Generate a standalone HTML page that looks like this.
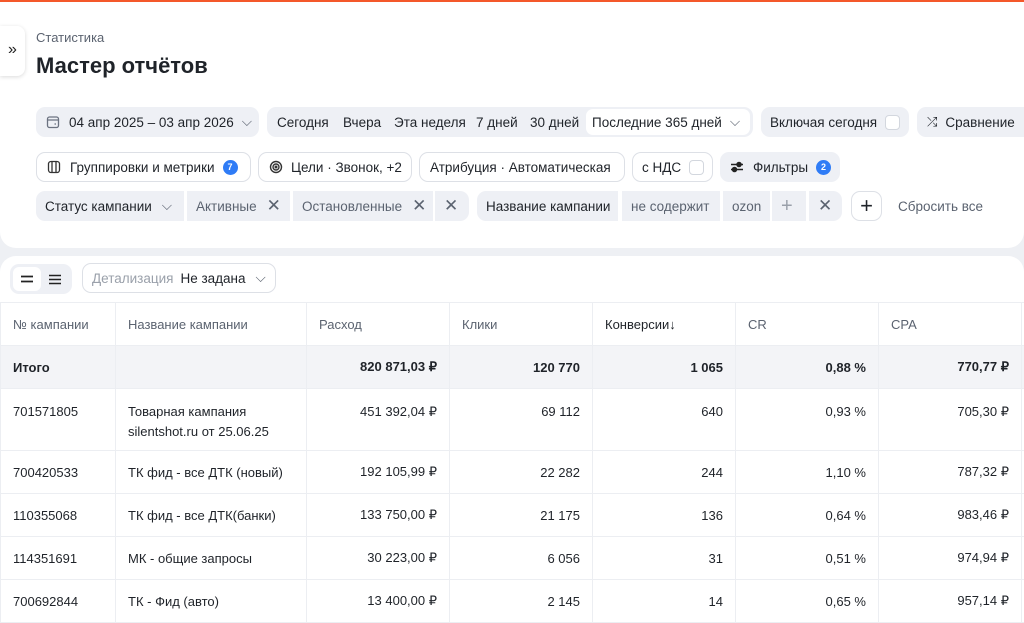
<!DOCTYPE html>
<html><head><meta charset="utf-8"><style>
*{box-sizing:border-box;margin:0;padding:0}
body{width:1024px;height:623px;overflow:hidden;background:#eef0f4;font-family:"Liberation Sans",sans-serif;font-size:13px;color:#1f2329;position:relative}
.top{position:absolute;left:0;top:0;width:1024px;height:248px;background:#fff;border-top:2px solid #f4582a;border-radius:0 0 16px 16px}
.side{position:absolute;left:0;top:26px;width:25px;height:50px;background:#fff;border-radius:0 8px 8px 0;box-shadow:0 1px 4px rgba(0,0,0,.15);font-size:16px;line-height:48px;text-align:center;color:#222}
.bc{position:absolute;left:36px;top:30px;color:#5b6370;font-size:13px}
h1{position:absolute;left:36px;top:53px;font-size:22px;font-weight:bold;color:#1f2329}
.b{position:absolute;height:30px;border-radius:9px;background:#eef0f5;display:flex;align-items:center;white-space:nowrap;font-size:13.5px}
.o{background:#fff;border:1px solid #dde0e6}
.seg{position:absolute;height:30px;background:#eef0f5;display:flex;align-items:center;padding:0 9px;white-space:nowrap;font-size:13.5px}
.g{color:#5b6370}
.chk{display:inline-block;width:15px;height:15px;border:1px solid #d3d7de;border-radius:4px;background:#fff;margin-left:8px}
.badge{display:inline-block;width:15px;height:15px;border-radius:50%;background:#2f7cf6;color:#fff;font-size:9px;font-weight:bold;line-height:15px;text-align:center;margin-left:8px}
.x{color:#5b6370;font-size:17px;margin-left:10px}
.t{position:absolute;top:115px;font-size:13.5px;white-space:nowrap}
.card{position:absolute;left:0;top:256px;width:1024px;height:367px;background:#fff;border-radius:16px 16px 0 0}
table{position:absolute;left:0;top:302px;border-collapse:collapse;font-size:13px;table-layout:fixed;width:1031px}
td{border:1px solid #eceef2;border-top:none;padding:0 12px;height:43px;vertical-align:middle;white-space:nowrap}
thead td{color:#5b6370;height:43px;border-top:1px solid #eceef2}
.r{text-align:right}
.tot td{background:#f3f4f7;font-weight:bold}
.tall td{height:62px;vertical-align:top;padding-top:13px;line-height:20px}
</style></head><body>
<div class="top"></div>
<div class="side">»</div>
<div class="bc">Статистика</div>
<h1>Мастер отчётов</h1>

<div class="b" style="left:36px;top:107px;width:223px;padding-left:10px"><svg width="14" height="14" viewBox="0 0 14 14" fill="none" stroke="#6b7280" stroke-width="1.3"><rect x="1.5" y="2" width="11" height="10.5" rx="2"/><path d="M1.5 5h11M8.5 9h1.5"/></svg><span style="margin-left:9px">04 апр 2025 – 03 апр 2026</span><span class="g" style="margin-left:8px">⌵</span></div>
<div class="b" style="left:267px;top:107px;width:486px"></div>
<span class="t" style="left:277px">Сегодня</span>
<span class="t" style="left:343px">Вчера</span>
<span class="t" style="left:394px">Эта неделя</span>
<span class="t" style="left:476px">7 дней</span>
<span class="t" style="left:530px">30 дней</span>
<div class="b" style="left:586px;top:109px;width:164px;height:26px;background:#fff;padding-left:6px;border-radius:7px">Последние 365 дней<span class="g" style="margin-left:8px">⌵</span></div>
<div class="b" style="left:761px;top:107px;width:148px;padding-left:9px">Включая сегодня<span class="chk"></span></div>
<div class="b" style="left:917px;top:107px;width:120px;padding-left:10px"><span style="font-size:13px">⤮</span><span style="margin-left:8px">Сравнение</span></div>

<div class="b o" style="left:36px;top:152px;width:215px;padding-left:10px"><svg width="14" height="14" viewBox="0 0 14 14" fill="none" stroke="#333" stroke-width="1.3"><rect x="1.5" y="1.5" width="11" height="11" rx="2.5"/><path d="M5 1.5v11M9 1.5v11"/></svg><span style="margin-left:9px">Группировки и метрики</span><span class="badge">7</span></div>
<div class="b o" style="left:258px;top:152px;width:154px;padding-left:10px"><svg width="14" height="14" viewBox="0 0 14 14" fill="none" stroke="#333" stroke-width="1.4"><circle cx="7" cy="7" r="5.5"/><circle cx="7" cy="7" r="3"/><circle cx="7" cy="7" r=".8" fill="#333"/></svg><span style="margin-left:8px">Цели · Звонок, +2</span></div>
<div class="b o" style="left:419px;top:152px;width:206px;padding-left:10px">Атрибуция · Автоматическая</div>
<div class="b o" style="left:632px;top:152px;width:81px;padding-left:9px">с НДС<span class="chk"></span></div>
<div class="b" style="left:720px;top:152px;width:120px;padding-left:10px"><svg width="14" height="14" viewBox="0 0 14 14" stroke="#222" stroke-width="1.5"><path d="M1 4.5h12M1 9.5h12"/><circle cx="9" cy="4.5" r="2" fill="#222"/><circle cx="4.5" cy="9.5" r="2" fill="#222"/></svg><span style="margin-left:9px">Фильтры</span><span class="badge">2</span></div>

<div class="seg" style="left:36px;top:191px;width:148px;border-radius:9px 0 0 9px">Статус кампании<span class="g" style="margin-left:10px">⌵</span></div>
<div class="seg g" style="left:187px;top:191px;width:103px">Активные<span class="x">✕</span></div>
<div class="seg g" style="left:293px;top:191px;width:140px">Остановленные<span class="x">✕</span></div>
<div class="seg g" style="left:435px;top:191px;width:34px;border-radius:0 9px 9px 0;font-size:17px">✕</div>
<div class="seg" style="left:477px;top:191px;width:141px;border-radius:9px 0 0 9px">Название кампании</div>
<div class="seg g" style="left:622px;top:191px;width:98px">не содержит</div>
<div class="seg g" style="left:723px;top:191px;width:47px">ozon</div>
<div class="seg" style="left:772px;top:191px;width:34px;color:#9aa0aa;font-size:20px">+</div>
<div class="seg g" style="left:809px;top:191px;width:33px;border-radius:0 9px 9px 0;font-size:17px">✕</div>
<div class="b o" style="left:851px;top:191px;width:31px;justify-content:center;font-size:22px;background:#fff">+</div>
<div class="g" style="position:absolute;left:898px;top:199px;font-size:13.5px">Сбросить все</div>

<div class="card"></div>
<div class="b" style="left:10px;top:264px;width:62px;height:30px;padding:3px">
<div style="width:28px;height:24px;background:#fff;border-radius:6px;display:flex;align-items:center;justify-content:center"><svg width="12" height="10"><path d="M0 2.5h12M0 7.5h12" stroke="#222" stroke-width="1.8"/></svg></div>
<div style="width:28px;display:flex;align-items:center;justify-content:center"><svg width="12" height="11"><path d="M0 1.5h12M0 5.5h12M0 9.5h12" stroke="#222" stroke-width="1.6"/></svg></div></div>
<div class="b o" style="left:82px;top:263px;width:194px;padding-left:9px"><span style="color:#9aa0aa">Детализация</span><span style="margin-left:7px">Не задана</span><span class="g" style="margin-left:10px">⌵</span></div>

<table>
<colgroup><col style="width:115px"><col style="width:191px"><col style="width:143px"><col style="width:143px"><col style="width:143px"><col style="width:143px"><col style="width:143px"><col style="width:10px"></colgroup>
<thead><tr><td>№ кампании</td><td>Название кампании</td><td>Расход</td><td>Клики</td><td style="color:#1f2329">Конверсии↓</td><td>CR</td><td>CPA</td><td></td></tr></thead>
<tbody>
<tr class="tot"><td>Итого</td><td></td><td class="r">820 871,03 ₽</td><td class="r">120 770</td><td class="r">1 065</td><td class="r">0,88 %</td><td class="r">770,77 ₽</td><td></td></tr>
<tr class="tall"><td>701571805</td><td>Товарная кампания<br>silentshot.ru от 25.06.25</td><td class="r">451 392,04 ₽</td><td class="r">69 112</td><td class="r">640</td><td class="r">0,93 %</td><td class="r">705,30 ₽</td><td></td></tr>
<tr><td>700420533</td><td>ТК фид - все ДТК (новый)</td><td class="r">192 105,99 ₽</td><td class="r">22 282</td><td class="r">244</td><td class="r">1,10 %</td><td class="r">787,32 ₽</td><td></td></tr>
<tr><td>110355068</td><td>ТК фид - все ДТК(банки)</td><td class="r">133 750,00 ₽</td><td class="r">21 175</td><td class="r">136</td><td class="r">0,64 %</td><td class="r">983,46 ₽</td><td></td></tr>
<tr><td>114351691</td><td>МК - общие запросы</td><td class="r">30 223,00 ₽</td><td class="r">6 056</td><td class="r">31</td><td class="r">0,51 %</td><td class="r">974,94 ₽</td><td></td></tr>
<tr><td>700692844</td><td>ТК - Фид (авто)</td><td class="r">13 400,00 ₽</td><td class="r">2 145</td><td class="r">14</td><td class="r">0,65 %</td><td class="r">957,14 ₽</td><td></td></tr>
</tbody></table>
</body></html>
